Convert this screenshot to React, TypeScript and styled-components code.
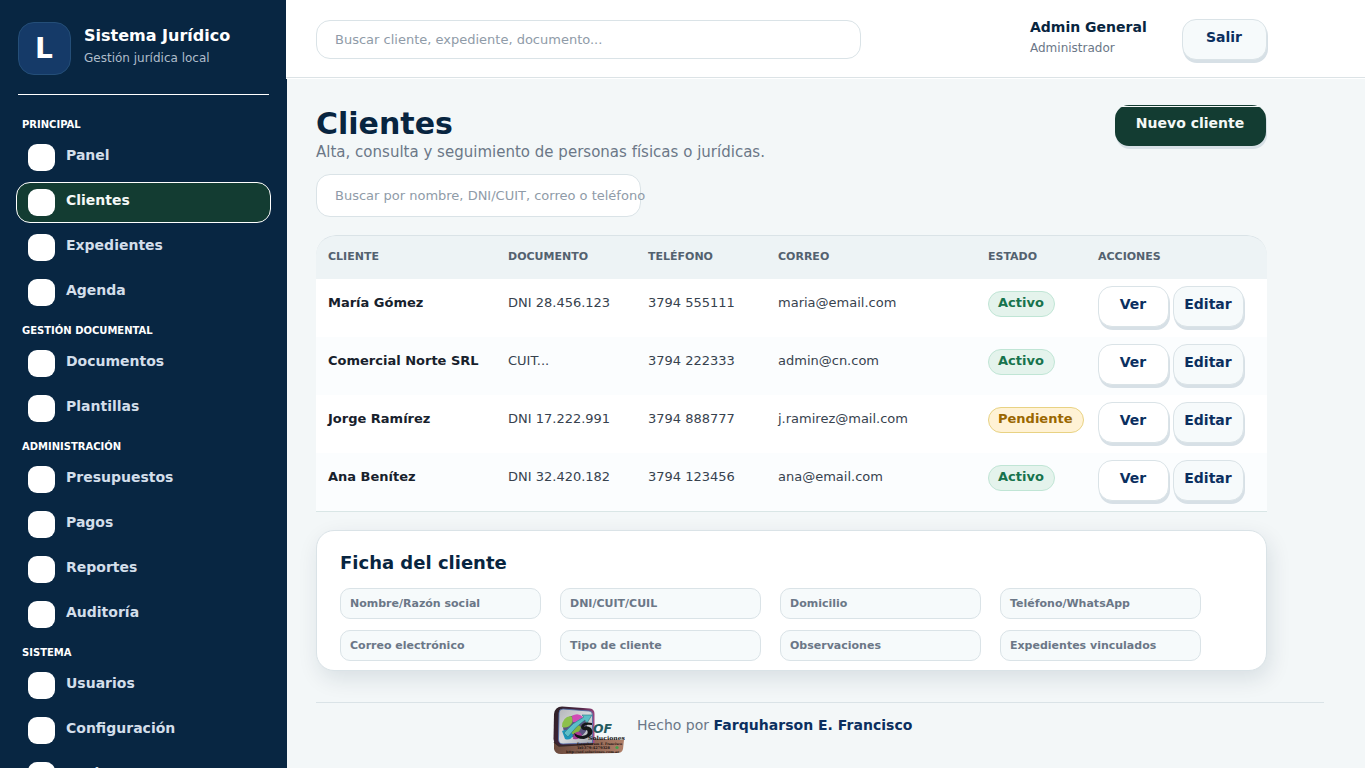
import React from 'react';
import styled, { createGlobalStyle, css } from 'styled-components';

const Global = createGlobalStyle`
  * { box-sizing: border-box; }
  html, body { margin: 0; height: 100%; overflow: hidden; }
  body { background: #f3f7f8; font-family: "DejaVu Sans", sans-serif; }
`;

const Shell = styled.div`display: flex; width: 1365px; height: 768px; overflow: hidden;`;

const Sidebar = styled.aside`width: 287px; flex: none; height: 768px; padding: 22px 16px 0; background: #082642; overflow: hidden;`;
const Brand = styled.div`display: flex; gap: 13px; height: 73px; margin: 0 2px; border-bottom: 1px solid #fff;`;
const BrandMark = styled.div`
  width: 53px; height: 53px; padding-right: 1px; border-radius: 16px; border: 1px solid #244e78; background: #153a68;
  color: #fff; font-size: 28px; font-weight: 700; line-height: 51px; text-align: center;
`;
const BrandText = styled.div`padding-top: 4px; white-space: nowrap;`;
const BrandName = styled.div`color: #fff; font-size: 16px; font-weight: 700; height: 25px;`;
const BrandNote = styled.div`color: #afbdcb; font-size: 12px;`;
const Nav = styled.nav`padding-top: 24px;`;
const Section = styled.section`padding-bottom: 8px;`;
const SectionTitle = styled.h3`margin: 0; padding-left: 6px; height: 18px; color: #fff; font-size: 10px; font-weight: 700;`;
const NavItem = styled.a<{ $active?: boolean }>`
  display: flex; gap: 11px; width: 255px; height: 41px; margin-bottom: 4px; padding: 6px 11px;
  border: 1px solid transparent; border-radius: 14px; color: #d3deea; font-size: 14px; font-weight: 700;
  ${p => p.$active && css`background: #133c32; border-color: #fff; color: #f4f8f6;`}
`;
const NavIcon = styled.span`width: 27px; height: 27px; border-radius: 9px; background: #fff;`;
const NavLabel = styled.span`padding-top: 3px;`;

const Main = styled.div`flex: 1; margin-left: -1px;`;
const Topbar = styled.header`display: flex; height: 79px; padding-left: 30px; background: linear-gradient(#fff 77px, #dce3e6 77px, #dce3e6 78px, #fff 78px);`;
const SearchBox = styled.div<{ $w: number; $h: number }>`
  width: ${p => p.$w}px; height: ${p => p.$h}px; padding-left: 18px; border: 1px solid #dae3e7; border-radius: 14px;
  background: #fff; color: #8f9ba8; font-size: 13px; line-height: ${p => p.$h - 2}px; white-space: nowrap;
`;
const TopSearch = styled(SearchBox)`margin-top: 20px;`;
const User = styled.div`width: 152px; margin-left: 169px; padding-top: 19px;`;
const UserName = styled.div`height: 22px; color: #082540; font-size: 14px; font-weight: 700;`;
const UserRole = styled.div`color: #6b7787; font-size: 12px;`;
const Button = styled.button<{ $w: number; $tone?: 'white' | 'green' }>`
  display: block; width: ${p => p.$w}px; height: 41px; padding: 0 1px 5px 0; flex: none;
  border: 1px solid #dae3e7; border-radius: 14px; background: ${p => (p.$tone === 'white' ? '#fff' : '#f6fafb')};
  box-shadow: 1px 3px 0 #d7e0e6; color: #0b2f5f; font: 700 14px "DejaVu Sans", sans-serif; text-align: center;
  ${p => p.$tone === 'green' && css`
    border: 0; color: #f4f8f6;
    background: linear-gradient(#133c32 1px, #f7faf9 1px, #f7faf9 2px, #133c32 2px);
  `}
`;
const Logout = styled(Button)`margin-top: 19px;`;

const Content = styled.main`padding: 26px 0 0 30px; width: 1038px;`;
const Heading = styled.div`display: flex; justify-content: space-between; width: 950px; height: 69px;`;
const Title = styled.h1`margin: 1px 0 0; height: 37px; color: #082540; font-size: 30px; line-height: 35px; font-weight: 700;`;
const Subtitle = styled.p`margin: 0; color: #6b7787; font-size: 15px; line-height: 18px; letter-spacing: 0.01px;`;

const Table = styled.section`
  width: 951px; height: 277px; margin-top: 18px; border-radius: 20px 20px 0 0; border-bottom: 1px solid #d9e6e6; overflow: hidden;
`;
const rowGrid = css`display: grid; grid-template-columns: 180px 140px 130px 210px 110px 1fr; padding-left: 12px;`;
const TableHead = styled.div`
  ${rowGrid}
  height: 44px; padding-top: 14px; padding-left: 12px; border-top: 1px solid #dae3e7; border-radius: 20px 20px 0 0;
  background: #edf3f5; color: #53616f; font-size: 11px; font-weight: 700;
`;
const Row = styled.div`
  ${rowGrid}
  height: 58px; background: #fff; color: #37424e; font-size: 13px;
  &:nth-child(odd) { background: #fbfdfe; }
`;
const Cell = styled.div<{ $strong?: boolean }>`padding-top: 16px; ${p => p.$strong && css`color: #17212c; font-weight: 700;`}`;
const Badge = styled.span<{ $pending?: boolean }>`
  justify-self: start; width: ${p => (p.$pending ? 96 : 67)}px; height: 26px; margin-top: 12px; padding: 3px 0 0 9px; border: 1px solid; border-radius: 13px;
  font-weight: 700; white-space: nowrap;
  ${p => p.$pending
    ? css`background: #fff2d5; border-color: #e8d283; color: #9a6700;`
    : css`background: #e4f3ec; border-color: #c0e5d5; color: #17734d;`}
`;
const Actions = styled.div`display: flex; gap: 4px; padding-top: 7px;`;

const Card = styled.section`
  width: 951px; height: 141px; margin-top: 18px; padding: 21px 23px; border: 1px solid #dae3e7; border-radius: 18px; background: #fff;
  box-shadow: 3px 8px 22px rgba(8, 37, 64, 0.11);
`;
const CardTitle = styled.h2`margin: 0; height: 36px; color: #082540; font-size: 18px; line-height: 21px; font-weight: 700;`;
const Fields = styled.div`display: grid; grid-template-columns: repeat(4, 201px); gap: 11px 19px;`;
const Field = styled.div`height: 31px; padding: 8px 0 0 9px; border: 1px solid #dae3e7; border-radius: 10px; background: #f6fafb; color: #6b7787; font-size: 11px; font-weight: 700;`;

const Footer = styled.footer`display: flex; gap: 12px; width: 1008px; margin-top: 31px; padding: 3px 0 0 237px; border-top: 1px solid #dae3e7;`;
const Credit = styled.p`margin: 0; padding-top: 11px; color: #6b7787; font-size: 14px; letter-spacing: 0.02px; b { color: #0b2f5f; }`;

const menu = [
  { title: 'PRINCIPAL', items: ['Panel', 'Clientes', 'Expedientes', 'Agenda'] },
  { title: 'GESTIÓN DOCUMENTAL', items: ['Documentos', 'Plantillas'] },
  { title: 'ADMINISTRACIÓN', items: ['Presupuestos', 'Pagos', 'Reportes', 'Auditoría'] },
  { title: 'SISTEMA', items: ['Usuarios', 'Configuración', 'Backup'] },
];
const clients = [
  ['María Gómez', 'DNI 28.456.123', '3794 555111', 'maria@email.com', 'Activo'],
  ['Comercial Norte SRL', 'CUIT...', '3794 222333', 'admin@cn.com', 'Activo'],
  ['Jorge Ramírez', 'DNI 17.222.991', '3794 888777', 'j.ramirez@mail.com', 'Pendiente'],
  ['Ana Benítez', 'DNI 32.420.182', '3794 123456', 'ana@email.com', 'Activo'],
];
const fields = ['Nombre/Razón social', 'DNI/CUIT/CUIL', 'Domicilio', 'Teléfono/WhatsApp', 'Correo electrónico', 'Tipo de cliente', 'Observaciones', 'Expedientes vinculados'];

const SofLogo = () => (
  <svg width="72" height="49" viewBox="0 0 72 49">
    <defs>
      <linearGradient id="edge" x1="0" y1="0" x2="1" y2="0.3">
        <stop offset="0" stopColor="#2b2024" /><stop offset="0.6" stopColor="#4c2442" /><stop offset="1" stopColor="#a04a85" />
      </linearGradient>
      <linearGradient id="base" x1="0" y1="0" x2="1" y2="0">
        <stop offset="0" stopColor="#6b4a3d" /><stop offset="1" stopColor="#b08069" />
      </linearGradient>
      <linearGradient id="plate" x1="0" y1="0" x2="1" y2="1">
        <stop offset="0" stopColor="#b4b6ba" /><stop offset="0.5" stopColor="#d8dadd" /><stop offset="1" stopColor="#a7a9b0" />
      </linearGradient>
    </defs>
    <path d="M1 31 L71 34 L70 43 Q69 47 65 47 L8 48 Q2 48 1 43Z" fill="url(#base)" />
    <path d="M9 0.5 L37 2.5 Q41.5 3 41.5 8 L41.5 37 L6 40 Q1 38 0.5 33 L1 8 Q2 0.5 9 0.5Z" fill="url(#edge)" />
    <path d="M10 3 L36 5 Q39.5 5 39.5 9 L39.5 37 L10 38 Q5.5 38 5.5 33 L6 7 Q6 3 10 3Z" fill="url(#plate)" stroke="#4a69a6" strokeWidth="0.8" />
    <path d="M1 36 L6 40 L40 38" fill="none" stroke="#362827" strokeWidth="1.4" />
    <ellipse cx="22" cy="20.5" rx="12" ry="11" fill="#5b5580" />
    <path d="M9 21 Q9 11 18 10 Q21 12 19 17 Q15 23 9 21Z" fill="#8dc04b" />
    <path d="M19 10 Q25 6 30 11 Q26 17 20 16Z" fill="#d24bb5" />
    <path d="M17 22 Q25 15 28 22 Q25 29 17 28Z" fill="#83b440" />
    <path d="M9 25 Q16 22 20 29 Q18 35 12 33Z" fill="#1b96bb" />
    <path d="M21 28 Q26 23 29 29 Q27 34 20 33Z" fill="#a83a96" />
    <path d="M11 27 Q20 16 31 11 L29 9 L39 9 L34 17 L32 14 Q23 20 15 31Z" fill="#5dbec7" stroke="#247887" strokeWidth="0.6" />
    <path d="M39 17 Q29 15 28 21 Q29 25 34 24 Q37 29 29 30 Q25 30 21 27 Q22 33 31 33 Q43 29 38 22 Q34 19 31 21 Q31 18 39 19Z" fill="#151719" />
    <text x="40" y="27" fontFamily="DejaVu Sans" fontStyle="italic" fontWeight="700" fontSize="13" fill="#235a5f" textLength="19" lengthAdjust="spacingAndGlyphs">OF</text>
    <text x="35" y="34" fontFamily="DejaVu Serif" fontWeight="700" fontSize="5.5" fill="#171717" textLength="37" lengthAdjust="spacingAndGlyphs">Soluciones</text>
    <text x="24" y="38.5" fontFamily="DejaVu Serif" fontWeight="700" fontSize="3.4" fill="#1b1210" textLength="45" lengthAdjust="spacingAndGlyphs">Farquharson E. Francisco</text>
    <text x="24" y="43" fontFamily="DejaVu Serif" fontWeight="700" fontSize="3.6" fill="#1b1210" textLength="33" lengthAdjust="spacingAndGlyphs">Tel:379-4279328</text>
    <text x="13" y="47" fontFamily="DejaVu Serif" fontWeight="700" fontSize="3.2" fill="#1b1210" textLength="53" lengthAdjust="spacingAndGlyphs">http://sof-soluciones.com.ar</text>
    <circle cx="64" cy="41.5" r="1.6" fill="#43a04b" />
  </svg>
);

export default function App() {
  return (
    <Shell>
      <Global />
      <Sidebar>
        <Brand>
          <BrandMark>L</BrandMark>
          <BrandText>
            <BrandName>Sistema Jurídico</BrandName>
            <BrandNote>Gestión jurídica local</BrandNote>
          </BrandText>
        </Brand>
        <Nav>
          {menu.map(section => (
            <Section key={section.title}>
              <SectionTitle>{section.title}</SectionTitle>
              {section.items.map(item => (
                <NavItem key={item} $active={item === 'Clientes'}>
                  <NavIcon />
                  <NavLabel>{item}</NavLabel>
                </NavItem>
              ))}
            </Section>
          ))}
        </Nav>
      </Sidebar>
      <Main>
        <Topbar>
          <TopSearch $w={545} $h={39}>Buscar cliente, expediente, documento...</TopSearch>
          <User>
            <UserName>Admin General</UserName>
            <UserRole>Administrador</UserRole>
          </User>
          <Logout $w={85}>Salir</Logout>
        </Topbar>
        <Content>
          <Heading>
            <div>
              <Title>Clientes</Title>
              <Subtitle>Alta, consulta y seguimiento de personas físicas o jurídicas.</Subtitle>
            </div>
            <Button $w={151} $tone="green">Nuevo cliente</Button>
          </Heading>
          <SearchBox $w={325} $h={43}>Buscar por nombre, DNI/CUIT, correo o teléfono</SearchBox>
          <Table>
            <TableHead>
              {['CLIENTE', 'DOCUMENTO', 'TELÉFONO', 'CORREO', 'ESTADO', 'ACCIONES'].map(h => <span key={h}>{h}</span>)}
            </TableHead>
            {clients.map(([name, doc, phone, mail, state]) => (
              <Row key={name}>
                <Cell $strong>{name}</Cell>
                <Cell>{doc}</Cell>
                <Cell>{phone}</Cell>
                <Cell>{mail}</Cell>
                <Badge $pending={state === 'Pendiente'}>{state}</Badge>
                <Actions>
                  <Button $w={71} $tone="white">Ver</Button>
                  <Button $w={71}>Editar</Button>
                </Actions>
              </Row>
            ))}
          </Table>
          <Card>
            <CardTitle>Ficha del cliente</CardTitle>
            <Fields>{fields.map(f => <Field key={f}>{f}</Field>)}</Fields>
          </Card>
          <Footer>
            <SofLogo />
            <Credit>Hecho por <b>Farquharson E. Francisco</b></Credit>
          </Footer>
        </Content>
      </Main>
    </Shell>
  );
}
